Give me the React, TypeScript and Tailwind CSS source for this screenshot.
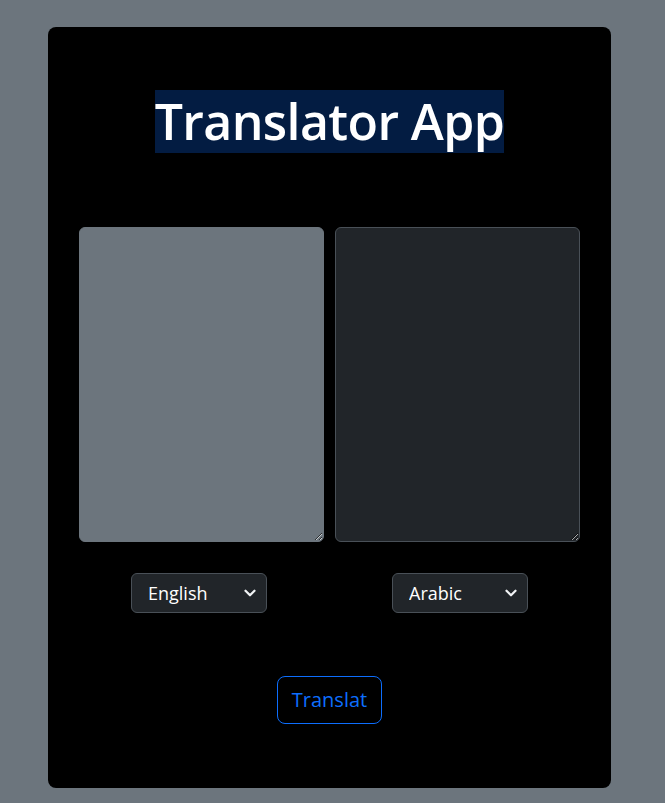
import { useState } from "react";

const langs = ["English", "Arabic", "French", "Spanish", "German"];

function LangSelect({ value, onChange }: { value: string; onChange: (v: string) => void }) {
  return (
    <div className="relative w-[136px]">
      <select
        value={value}
        onChange={(e) => onChange(e.target.value)}
        className="block h-[40px] w-full appearance-none rounded-[6px] border border-[#495057] bg-[#212529] pl-4 pr-9 text-[18px] text-white outline-none"
      >
        {langs.map((l) => (
          <option key={l}>{l}</option>
        ))}
      </select>
      <svg
        className="pointer-events-none absolute right-[11px] top-1/2 -translate-y-1/2"
        width="12"
        height="12"
        viewBox="0 0 16 16"
        fill="none"
        stroke="#f1f3f5"
        strokeWidth="3"
        strokeLinecap="round"
        strokeLinejoin="round"
      >
        <path d="m2 5 6 6 6-6" />
      </svg>
    </div>
  );
}

export default function App() {
  const [from, setFrom] = useState("English");
  const [to, setTo] = useState("Arabic");

  return (
    <div
      className="min-h-[803px] bg-[#6c757d] pt-[27px] pb-[15px]"
      style={{ fontFamily: '"Open Sans", "Noto Sans", sans-serif' }}
    >
      <div className="ml-[48px] flex h-[761px] w-[563px] flex-col items-center rounded-[8px] bg-black px-[31px] pt-[63px]">
        <h1 className="bg-[#031c42] text-[50px] font-semibold leading-[63px] tracking-[-0.6px] text-white">
          Translator App
        </h1>

        <div className="mt-[74px] grid w-full grid-cols-2 gap-[11px]">
          <textarea className="h-[315px] rounded-[6px] border border-[#6c757d] bg-[#6c757d] p-3 text-white outline-none" />
          <textarea className="h-[315px] rounded-[6px] border border-[#495057] bg-[#212529] p-3 text-white outline-none" />
        </div>

        <div className="mt-[31px] grid w-full grid-cols-2 gap-[11px]">
          <div className="flex justify-center pr-[5px]">
            <LangSelect value={from} onChange={setFrom} />
          </div>
          <div className="flex justify-center pl-[5px]">
            <LangSelect value={to} onChange={setTo} />
          </div>
        </div>

        <button className="mt-[63px] h-[48px] w-[105px] rounded-[8px] border border-[#0d6efd] text-[20px] text-[#0d6efd]">
          Translat
        </button>
      </div>
    </div>
  );
}
